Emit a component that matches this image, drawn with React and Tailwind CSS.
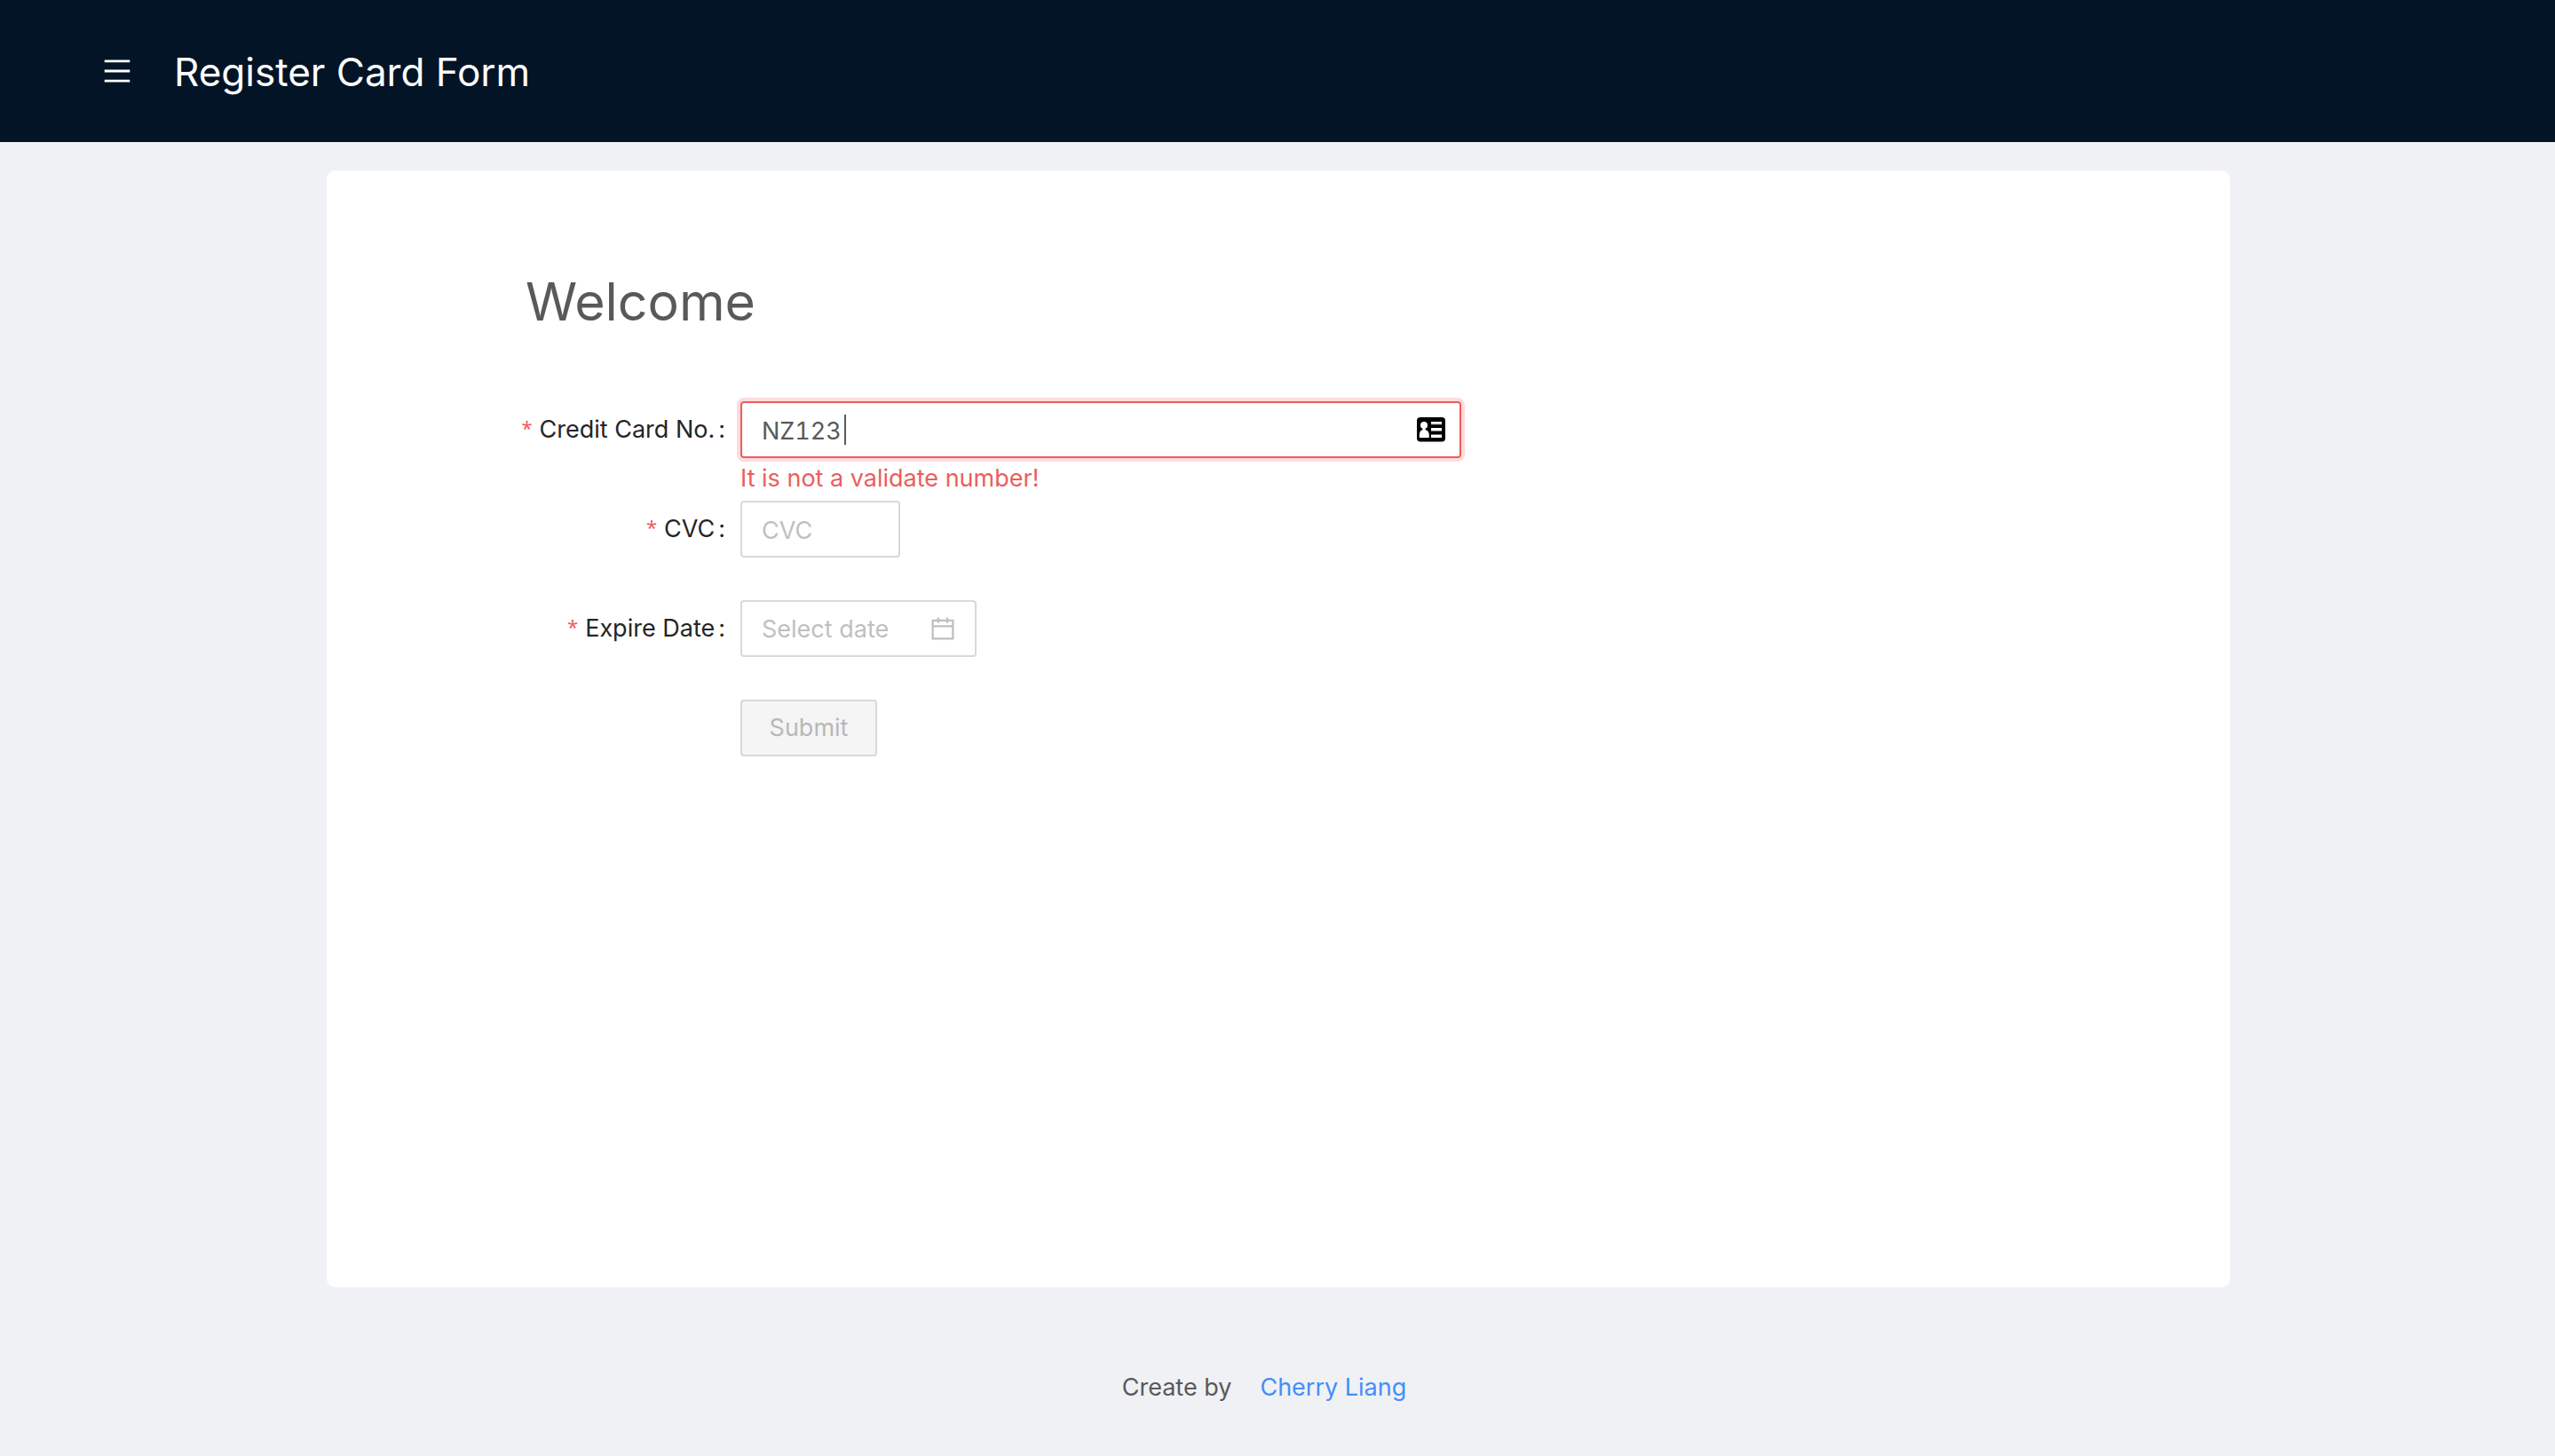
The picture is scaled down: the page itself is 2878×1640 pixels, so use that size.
function MenuIcon() {
  return (
    <svg viewBox="64 64 896 896" className="size-8" fill="currentColor" aria-hidden="true">
      <path d="M904 160H120c-4.400 0-8 3.600-8 8v64c0 4.400 3.600 8 8 8h784c4.400 0 8-3.600 8-8v-64c0-4.400-3.600-8-8-8zm0 624H120c-4.400 0-8 3.600-8 8v64c0 4.400 3.600 8 8 8h784c4.400 0 8-3.600 8-8v-64c0-4.400-3.600-8-8-8zm0-312H120c-4.400 0-8 3.600-8 8v64c0 4.400 3.600 8 8 8h784c4.400 0 8-3.600 8-8v-64c0-4.400-3.600-8-8-8z" />
    </svg>
  );
}

function CalendarIcon() {
  return (
    <svg viewBox="64 64 896 896" className="size-7 shrink-0" fill="currentColor" aria-hidden="true">
      <path d="M880 184H712v-64c0-4.400-3.600-8-8-8h-56c-4.400 0-8 3.600-8 8v64H384v-64c0-4.400-3.600-8-8-8h-56c-4.400 0-8 3.600-8 8v64H144c-17.700 0-32 14.300-32 32v664c0 17.700 14.300 32 32 32h736c17.700 0 32-14.300 32-32V216c0-17.700-14.300-32-32-32zm-40 656H184V460h656v380zM184 392V256h128v48c0 4.400 3.600 8 8 8h56c4.400 0 8-3.600 8-8v-48h256v48c0 4.400 3.600 8 8 8h56c4.400 0 8-3.600 8-8v-48h128v136H184z" />
    </svg>
  );
}

function ContactCardIcon() {
  return (
    <svg viewBox="0 0 32 28" className="h-7 w-8 shrink-0" aria-hidden="true">
      <rect width="32" height="27.500" rx="4" fill="#000" />
      <circle cx="8" cy="9" r="4" fill="#fff" />
      <path d="M6.500 12h3v2c2.500.6 4.300 3 4.300 6v3H2.800v-3c0-3 1.400-5.400 3.700-6z" fill="#fff" />
      <path d="M16 5h12v3H16zM16 12h12v3H16zM16 20h12v3H16z" fill="#fff" />
      <path d="M16 7.500h12v1H16zM16 15h12v1H16zM16 19h12v1H16z" fill="#777" />
    </svg>
  );
}

function Field({ id, label, children }) {
  return (
    <div className="flex">
      <label htmlFor={id} className="flex h-16 w-[466px] shrink-0 items-center justify-end pr-[17px] text-[27px] leading-10 text-[#252525]">
        <span className="mr-2 pb-1.5 font-['Noto_Sans'] text-[22px] leading-10 text-[#ee5b5b]">*</span>
        {label}
        <span className="ml-1">:</span>
      </label>
      <div className="min-w-0 grow">{children}</div>
    </div>
  );
}

export default function App() {
  return (
    <div className="flex min-h-screen flex-col bg-[#f0f1f5] font-['Inter',sans-serif] text-[27px] leading-10 text-[#595959]">
      <header className="flex h-40 items-center bg-[#031426] pl-[116px] text-white">
        <button type="button" aria-label="Menu" className="mr-12">
          <MenuIcon />
        </button>
        <h1 className="pt-0.5 text-[44px] leading-[64px]">Register Card Form</h1>
      </header>

      <main className="flex grow pt-8 pr-[366px] pl-[368px]">
        <section className="grow rounded-[10px] bg-white pt-[104px]">
          <h2 className="pl-[224px] text-[59px] leading-[88px]">Welcome</h2>
          <form className="pt-[68px]" onSubmit={(e) => e.preventDefault()}>
            <Field id="card" label="Credit Card No.">
              <div className="relative flex h-16 max-w-[812px] items-center rounded-sm border-2 border-[#ee5b5b] pr-4 ring-4 ring-[#fddcdd]">
                <input id="card" type="text" defaultValue="NZ123" className="h-full w-0 grow bg-transparent pt-0.5 pl-[22px] tabular-nums caret-transparent outline-none" />
                <span className="absolute left-[115px] h-[34px] w-0.5 bg-[#595959]" />
                <ContactCardIcon />
              </div>
              <p className="h-12 pt-[3px] text-[#ea5e5d]">It is not a validate number!</p>
            </Field>
            <Field id="cvc" label="CVC">
              <input id="cvc" type="text" placeholder="CVC" className="h-16 w-[180px] rounded-sm border-2 border-[#d9d9d9] px-[22px] pt-[3px] outline-none placeholder:text-[#bfbfbf]" />
            </Field>
            <div className="pt-12">
              <Field id="expire" label="Expire Date">
                <div className="flex h-16 w-[266px] items-center rounded-sm border-2 border-[#d9d9d9] pr-[22px] text-[#bfbfbf]">
                  <input id="expire" type="text" placeholder="Select date" className="h-full w-0 grow bg-transparent pl-[22px] outline-none placeholder:text-[#bfbfbf]" />
                  <CalendarIcon />
                </div>
              </Field>
            </div>
            <div className="flex pt-12 pl-[466px]">
              <button type="submit" disabled className="h-16 w-[154px] rounded-sm border-2 border-[#d9d9d9] bg-[#f5f5f5] text-[#b8b8b8]">
                Submit
              </button>
            </div>
          </form>
        </section>
      </main>

      <footer className="flex h-[190px] items-start justify-center gap-8 pt-[93px] pr-[30px]">
        <span>Create by</span>
        <a href="#author" className="text-[#438ff7]">Cherry Liang</a>
      </footer>
    </div>
  );
}
